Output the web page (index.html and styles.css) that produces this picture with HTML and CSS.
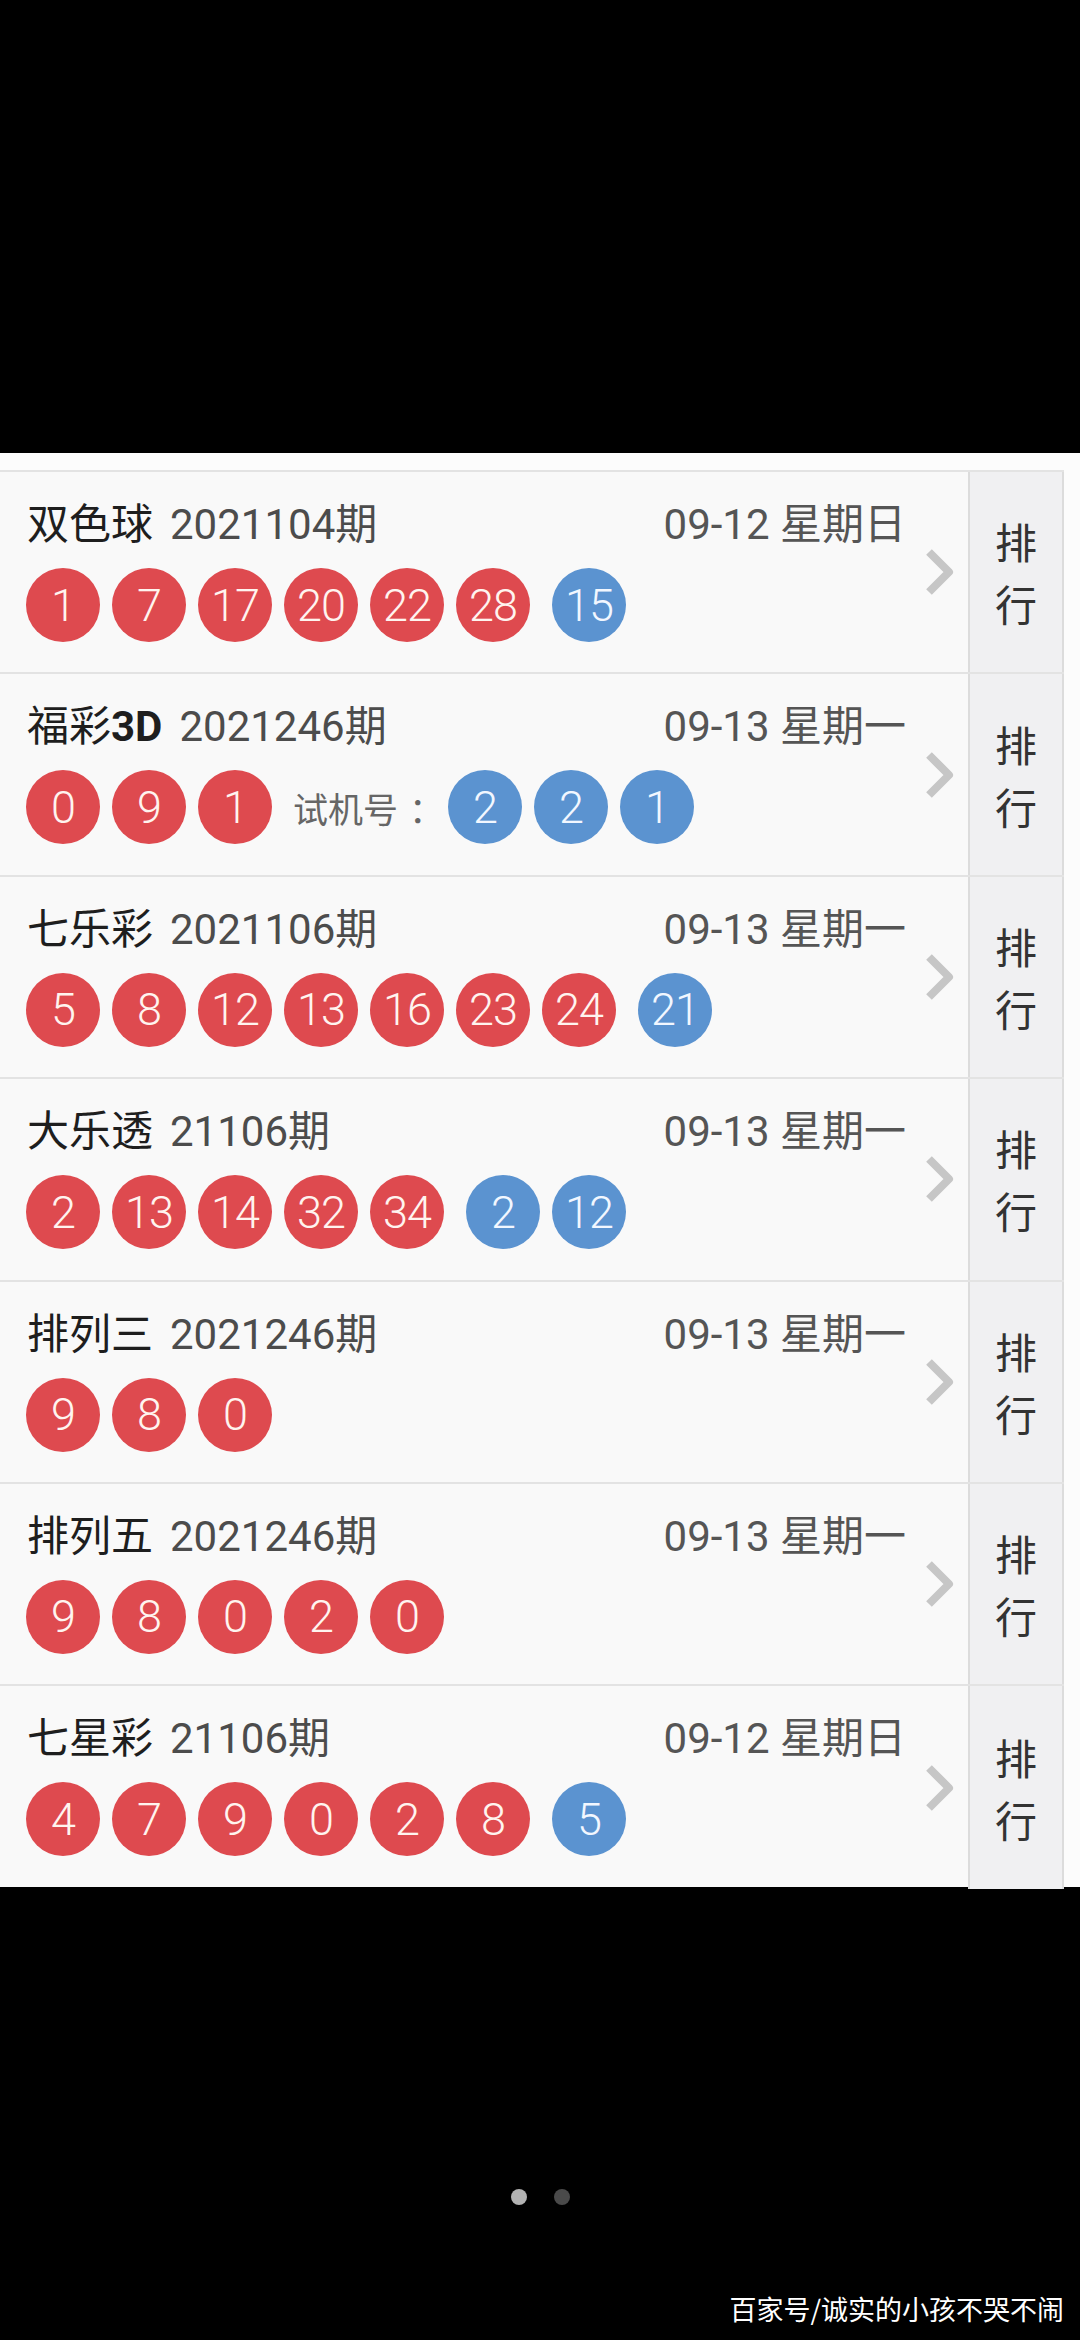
FILE: index.html
```html
<!DOCTYPE html>
<html lang="zh-CN">
<head>
<meta charset="utf-8">
<title>开奖列表</title>
<link rel="stylesheet" href="styles.css">
</head>
<body>
<div class="top-black"></div>
<div class="panel">
  <div class="list">
    <div class="row">
      <div class="main">
        <div class="head">
          <div class="title"><span class="name">双色球</span><span class="issue">2021104期</span></div>
          <div class="date">09-12 星期日</div>
        </div>
        <div class="balls">
          <span class="ball red">1</span><span class="ball red">7</span><span class="ball red">17</span><span class="ball red">20</span><span class="ball red">22</span><span class="ball red">28</span><span class="ball blue first-blue">15</span>
        </div>
      </div>
      <div class="arrow"><svg width="32" height="48" viewBox="0 0 32 48"><polyline points="6,4 26,24 6,44" fill="none" stroke="#c6c6c6" stroke-width="8" stroke-linejoin="round"/></svg></div>
      <div class="rank"><span>排</span><span>行</span></div>
    </div>
    <div class="row">
      <div class="main">
        <div class="head">
          <div class="title"><span class="name">福彩<b class="bold">3D</b></span><span class="issue">2021246期</span></div>
          <div class="date">09-13 星期一</div>
        </div>
        <div class="balls">
          <span class="ball red">0</span><span class="ball red">9</span><span class="ball red">1</span><span class="trial">试机号<span class="colon">：</span></span><span class="ball blue">2</span><span class="ball blue">2</span><span class="ball blue">1</span>
        </div>
      </div>
      <div class="arrow"><svg width="32" height="48" viewBox="0 0 32 48"><polyline points="6,4 26,24 6,44" fill="none" stroke="#c6c6c6" stroke-width="8" stroke-linejoin="round"/></svg></div>
      <div class="rank"><span>排</span><span>行</span></div>
    </div>
    <div class="row">
      <div class="main">
        <div class="head">
          <div class="title"><span class="name">七乐彩</span><span class="issue">2021106期</span></div>
          <div class="date">09-13 星期一</div>
        </div>
        <div class="balls">
          <span class="ball red">5</span><span class="ball red">8</span><span class="ball red">12</span><span class="ball red">13</span><span class="ball red">16</span><span class="ball red">23</span><span class="ball red">24</span><span class="ball blue first-blue">21</span>
        </div>
      </div>
      <div class="arrow"><svg width="32" height="48" viewBox="0 0 32 48"><polyline points="6,4 26,24 6,44" fill="none" stroke="#c6c6c6" stroke-width="8" stroke-linejoin="round"/></svg></div>
      <div class="rank"><span>排</span><span>行</span></div>
    </div>
    <div class="row">
      <div class="main">
        <div class="head">
          <div class="title"><span class="name">大乐透</span><span class="issue">21106期</span></div>
          <div class="date">09-13 星期一</div>
        </div>
        <div class="balls">
          <span class="ball red">2</span><span class="ball red">13</span><span class="ball red">14</span><span class="ball red">32</span><span class="ball red">34</span><span class="ball blue first-blue">2</span><span class="ball blue">12</span>
        </div>
      </div>
      <div class="arrow"><svg width="32" height="48" viewBox="0 0 32 48"><polyline points="6,4 26,24 6,44" fill="none" stroke="#c6c6c6" stroke-width="8" stroke-linejoin="round"/></svg></div>
      <div class="rank"><span>排</span><span>行</span></div>
    </div>
    <div class="row">
      <div class="main">
        <div class="head">
          <div class="title"><span class="name">排列三</span><span class="issue">2021246期</span></div>
          <div class="date">09-13 星期一</div>
        </div>
        <div class="balls">
          <span class="ball red">9</span><span class="ball red">8</span><span class="ball red">0</span>
        </div>
      </div>
      <div class="arrow"><svg width="32" height="48" viewBox="0 0 32 48"><polyline points="6,4 26,24 6,44" fill="none" stroke="#c6c6c6" stroke-width="8" stroke-linejoin="round"/></svg></div>
      <div class="rank"><span>排</span><span>行</span></div>
    </div>
    <div class="row">
      <div class="main">
        <div class="head">
          <div class="title"><span class="name">排列五</span><span class="issue">2021246期</span></div>
          <div class="date">09-13 星期一</div>
        </div>
        <div class="balls">
          <span class="ball red">9</span><span class="ball red">8</span><span class="ball red">0</span><span class="ball red">2</span><span class="ball red">0</span>
        </div>
      </div>
      <div class="arrow"><svg width="32" height="48" viewBox="0 0 32 48"><polyline points="6,4 26,24 6,44" fill="none" stroke="#c6c6c6" stroke-width="8" stroke-linejoin="round"/></svg></div>
      <div class="rank"><span>排</span><span>行</span></div>
    </div>
    <div class="row">
      <div class="main">
        <div class="head">
          <div class="title"><span class="name">七星彩</span><span class="issue">21106期</span></div>
          <div class="date">09-12 星期日</div>
        </div>
        <div class="balls">
          <span class="ball red">4</span><span class="ball red">7</span><span class="ball red">9</span><span class="ball red">0</span><span class="ball red">2</span><span class="ball red">8</span><span class="ball blue first-blue">5</span>
        </div>
      </div>
      <div class="arrow"><svg width="32" height="48" viewBox="0 0 32 48"><polyline points="6,4 26,24 6,44" fill="none" stroke="#c6c6c6" stroke-width="8" stroke-linejoin="round"/></svg></div>
      <div class="rank"><span>排</span><span>行</span></div>
    </div>
  </div>
</div>
<div class="bottom-black">
  <div class="dots"><span class="dot on"></span><span class="dot"></span></div>
  <div class="watermark">百家号/诚实的小孩不哭不闹</div>
</div>
</body>
</html>
```
FILE: styles.css
```css
html, body {
  margin: 0;
  padding: 0;
  background: #000;
}
body {
  width: 1080px;
  height: 2340px;
  overflow: hidden;
  font-family: Roboto, "Noto Sans CJK SC", sans-serif;
}
.top-black {
  height: 453px;
  background: #000;
}
.panel {
  height: 1434px;
  background: #fcfcfc;
  padding-top: 17px;
  padding-right: 16px;
  box-sizing: border-box;
}
.list {
  border-top: 2px solid #e3e3e3;
  background: #f9f9f9;
}
.row {
  display: flex;
  height: 202.4px;
  box-sizing: border-box;
  border-bottom: 2px solid #e3e3e3;
}
.row:last-child {
  border-bottom: none;
}
.main {
  width: 910px;
  padding: 28px 4px 0 26px;
  box-sizing: border-box;
}
.head {
  display: flex;
  justify-content: space-between;
  height: 50px;
  line-height: 50px;
  font-size: 42px;
}
.title {
  display: flex;
  padding-left: 1px;
}
.name {
  color: #1e1e1e;
  font-weight: 400;
}
.bold {
  font-weight: 700;
}
.issue {
  color: #4c4c4c;
  margin-left: 17px;
}
.date {
  color: #555;
}
.balls {
  display: flex;
  align-items: center;
  gap: 12px;
  margin-top: 18px;
  height: 74px;
}
.ball {
  width: 74px;
  height: 74px;
  border-radius: 50%;
  display: flex;
  align-items: center;
  justify-content: center;
  font-size: 45px;
  font-weight: 300;
  color: #fff4ef;
  line-height: 1;
  letter-spacing: -1px;
}
.ball.red {
  background: #de4a4f;
}
.ball.blue {
  background: #5b93d0;
  color: #f2f7ff;
}
.ball.first-blue {
  margin-left: 10px;
}
.trial {
  font-size: 35px;
  color: #666;
  margin-left: 9px;
  margin-right: -8px;
  font-family: "Noto Sans CJK SC", sans-serif;
}
.colon {
  margin-left: 11px;
}
.arrow {
  width: 58px;
  display: flex;
  align-items: center;
  justify-content: center;
}
.rank {
  width: 96px;
  box-sizing: border-box;
  background: #f0f0f2;
  border-left: 2px solid #dcdcdc;
  border-right: 2px solid #dcdcdc;
  display: flex;
  flex-direction: column;
  align-items: center;
  justify-content: center;
  font-size: 42px;
  line-height: 62px;
  color: #333;
  font-family: "Noto Sans CJK SC", sans-serif;
}
.bottom-black {
  height: 453px;
  background: #000;
  display: flex;
  flex-direction: column;
  box-sizing: border-box;
  padding-top: 302px;
}
.dots {
  display: flex;
  justify-content: center;
  gap: 27px;
  height: 16px;
}
.dot {
  width: 16px;
  height: 16px;
  border-radius: 50%;
  background: #4a4a4a;
}
.dot.on {
  background: #b2b2b2;
}
.watermark {
  margin-top: 88px;
  align-self: flex-end;
  margin-right: 16px;
  font-size: 27px;
  line-height: 32px;
  color: #fff;
  font-family: "Noto Sans CJK SC", sans-serif;
}
```
